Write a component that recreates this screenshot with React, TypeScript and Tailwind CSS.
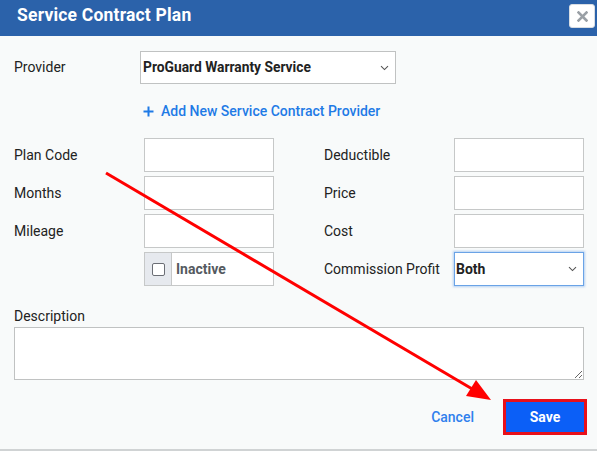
import React from "react";

const Chevron = () => (
  <svg width="9" height="6" viewBox="0 0 9 6" className="shrink-0">
    <path d="M1 1.2 L4.5 4.6 L8 1.2" fill="none" stroke="#555" strokeWidth="1.1" />
  </svg>
);

const Input = () => (
  <div className="w-[130px] h-[34px] bg-white border border-[#c6c8c8]" />
);

export default function App() {
  return (
    <div
      className="relative w-[597px] h-[451px] overflow-hidden bg-white text-[#222]"
      style={{ fontFamily: "Roboto, 'Liberation Sans', sans-serif" }}
    >
      {/* Header */}
      <div className="h-[36px] bg-[#2b62aa] flex items-start justify-between pl-[17px] pr-[2px]">
        <div className="text-white font-bold text-[17.5px] leading-[20px] mt-[5px] tracking-[0.2px]">
          Service Contract Plan
        </div>
        <div className="mt-[4px] w-[26px] h-[24px] bg-white rounded-[3px] flex items-center justify-center border border-[#d8dde3]">
          <svg width="11" height="11" viewBox="0 0 11 11">
            <path d="M1.5 1.5 L9.5 9.5 M9.5 1.5 L1.5 9.5" stroke="#9aa0a6" strokeWidth="2.6" strokeLinecap="square" />
          </svg>
        </div>
      </div>

      {/* Body */}
      <div className="bg-[#f8fafa] h-[413px] pl-[14px] pr-[13px] pt-[15px] flex flex-col">
        {/* Provider */}
        <div className="flex items-center h-[33px]">
          <div className="w-[126px] text-[14px]">Provider</div>
          <div className="w-[256px] h-[33px] bg-white border border-[#c0c2c2] flex items-center justify-between pl-[2px] pr-[6px]">
            <span className="font-bold text-[13.8px] text-[#222]">ProGuard Warranty Service</span>
            <Chevron />
          </div>
        </div>

        {/* Add link */}
        <div className="mt-[17px] ml-[129px] flex items-center h-[20px] text-[#1f7ae6] text-[14px] font-medium">
          <svg width="11" height="11" viewBox="0 0 11 11" className="mr-[7px]">
            <path d="M5.5 0.5 V10.5 M0.5 5.5 H10.5" stroke="#1f7ae6" strokeWidth="2" />
          </svg>
          Add New Service Contract Provider
        </div>

        {/* Grid */}
        <div className="mt-[17px] flex gap-[50px]">
          <div className="flex flex-col gap-[4px]">
            {["Plan Code", "Months", "Mileage"].map((l) => (
              <div key={l} className="flex items-center">
                <div className="w-[130px] text-[14px]">{l}</div>
                <Input />
              </div>
            ))}
            <div className="flex items-center">
              <div className="w-[130px]" />
              <div className="w-[130px] h-[34px] flex border border-[#c6c8c8] bg-white">
                <div className="w-[27px] h-full bg-[#e6e9ee] border-r border-[#c6c8c8] flex items-center justify-center">
                  <div className="w-[13px] h-[13px] bg-white border-[1.5px] border-[#6b6e75] rounded-[2px]" />
                </div>
                <div className="flex items-center pl-[4px] text-[14px] font-bold text-[#555a60]">Inactive</div>
              </div>
            </div>
          </div>
          <div className="flex flex-col gap-[4px]">
            {["Deductible", "Price", "Cost"].map((l) => (
              <div key={l} className="flex items-center">
                <div className="w-[130px] text-[14px]">{l}</div>
                <Input />
              </div>
            ))}
            <div className="flex items-center">
              <div className="w-[130px] text-[14px]">Commission Profit</div>
              <div className="w-[130px] h-[34px] bg-white border border-[#6aa3e6] shadow-[0_0_2px_1px_rgba(100,160,235,0.45)] flex items-center justify-between pl-[1px] pr-[6px]">
                <span className="font-bold text-[14px] text-[#222]">Both</span>
                <Chevron />
              </div>
            </div>
          </div>
        </div>

        {/* Description */}
        <div className="mt-[21px] text-[14px] leading-[18px]">Description</div>
        <textarea className="mt-[2px] w-[570px] h-[53px] bg-white border border-[#c0c2c2] outline-none resize-y block" />

        {/* Footer */}
        <div className="mt-[19px] flex items-center justify-end gap-[29px] -mr-[3px]">
          <span className="text-[#2f80ed] text-[14px] font-medium">Cancel</span>
          <div className="w-[84px] h-[36px] border-[3px] border-[#e8101a] bg-[#0b5ff7] flex items-center justify-center text-white font-bold text-[14px]">
            Save
          </div>
        </div>
      </div>
      <div className="h-[2px] bg-[#d0d3d4]" />

      {/* Annotation arrow */}
      <svg className="absolute inset-0 pointer-events-none" width="597" height="451" viewBox="0 0 597 451">
        <line x1="106" y1="173" x2="474" y2="390" stroke="#ff0000" strokeWidth="3" />
        <polygon points="491,400 466,396 476,380" fill="#ff0000" />
      </svg>
    </div>
  );
}
